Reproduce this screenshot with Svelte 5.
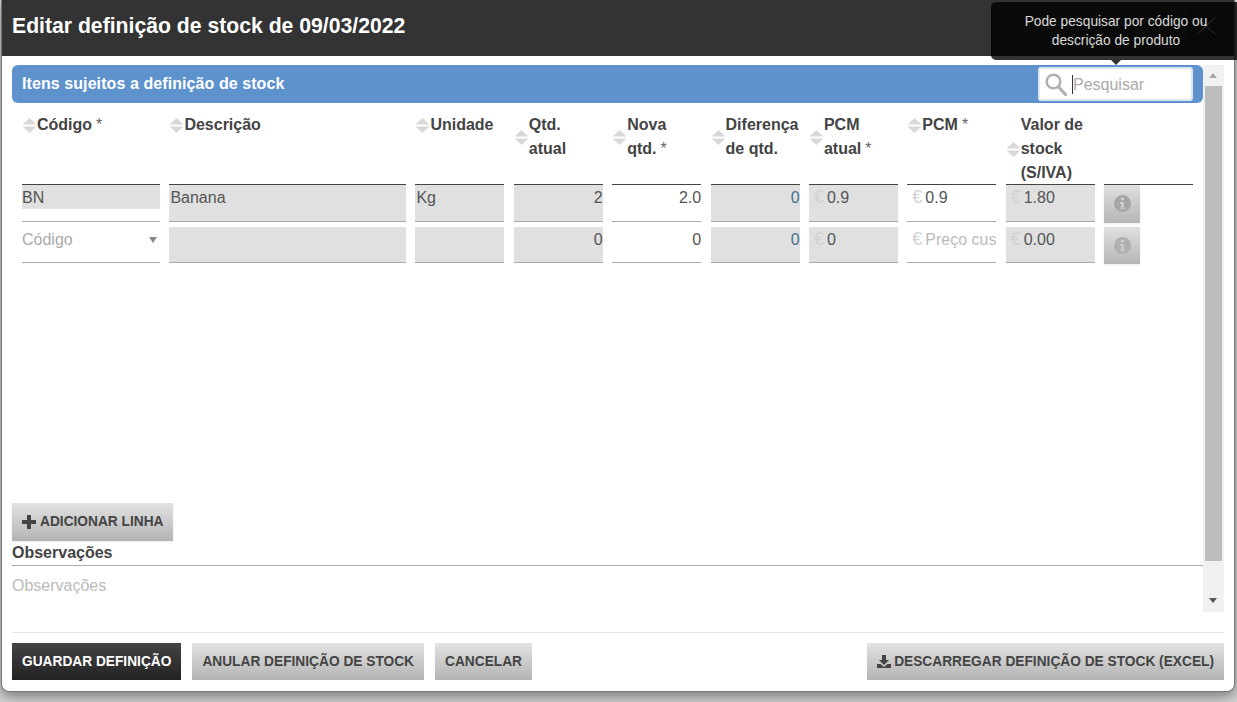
<script>
  const columns = [
    { label: "Código", req: true },
    { label: "Descrição" },
    { label: "Unidade" },
    { label: "Qtd.<br>atual" },
    { label: "Nova<br>qtd.", req: true },
    { label: "Diferença<br>de qtd." },
    { label: "PCM<br>atual", req: true },
    { label: "PCM", req: true },
    { label: "Valor de<br>stock<br>(S/IVA)" },
  ];

  const rows = [
    { code: "BN", desc: "Banana", unit: "Kg", qty: "2", next: "2.0", diff: "0", cost: "0.9", pcm: "0.9", total: "1.80" },
    { code: "", desc: "", unit: "", qty: "0", next: "0", diff: "0", cost: "0", pcm: "", total: "0.00" },
  ];
</script>

<div class="page">
  <div class="modal">
    <header class="modal-header">
      <h1>Editar definição de stock de 09/03/2022</h1>
      <button class="close-btn" aria-label="Fechar">
        <svg width="20" height="18" viewBox="0 0 20 18"><path d="M0.5 0.5 L19.5 17.5 M19.5 0.5 L0.5 17.5" stroke="#fff" stroke-width="1" fill="none" /></svg>
      </button>
    </header>

    <div class="modal-body">
      <div class="content">
        <div class="bar">
          <h2>Itens sujeitos a definição de stock</h2>
          <div class="search">
            <svg class="search-icon" width="22" height="23" viewBox="0 0 22 23">
              <circle cx="8.5" cy="8.5" r="6.8" fill="none" stroke="#b0b0b0" stroke-width="2.6" />
              <path d="M13.5 14 L20.5 21.5" stroke="#b0b0b0" stroke-width="3.2" stroke-linecap="round" />
            </svg>
            <span class="caret"></span>
            <span class="search-ph">Pesquisar</span>
            <div class="tooltip">Pode pesquisar por código ou<br>descrição de produto</div>
          </div>
        </div>

        <div class="grid">
          {#each columns as col}
            <div class="th">
              <div class="th-inner">
                <svg class="sort" width="15" height="15" viewBox="0 0 15 15">
                  <path d="M7.5 0 L14.5 6.5 H0.5 Z M0.5 8.5 H14.5 L7.5 15 Z" fill="#d8d8d8" />
                </svg>
                <span>{@html col.label}{#if col.req}<span class="req">*</span>{/if}</span>
              </div>
            </div>
          {/each}
          <div class="th"></div>

          {#each rows as row, i}
            <div class="td td-code" class:first={i === 0}>
              {#if row.code}
                <div class="code-value">{row.code}</div>
              {:else}
                <span class="ph">Código</span>
                <span class="select-arrow"></span>
              {/if}
            </div>
            <div class="td ro left" class:first={i === 0}>{row.desc}</div>
            <div class="td ro left" class:first={i === 0}>{row.unit}</div>
            <div class="td ro right" class:first={i === 0}>{row.qty}</div>
            <div class="td right" class:first={i === 0}>{row.next}</div>
            <div class="td ro right blue" class:first={i === 0}>{row.diff}</div>
            <div class="td ro money" class:first={i === 0}><i>€</i>{row.cost}</div>
            <div class="td money" class:first={i === 0}>
              <i>€</i>{#if row.pcm}{row.pcm}{:else}<input class="cost-input" placeholder="Preço custo" />{/if}
            </div>
            <div class="td ro money" class:first={i === 0}><i>€</i>{row.total}</div>
            <div class="td-action" class:first={i === 0}>
              <button class="info" class:dim={i === 1} aria-label="Informação">
                <svg width="17" height="17" viewBox="0 0 17 17">
                  <path fill-rule="evenodd" d="M8.5 0a8.5 8.5 0 1 0 0 17a8.5 8.5 0 0 0 0-17Z M7 2.8h3v2.5H7Z M6 7h4v5.2h1.2v2H5.9v-2H7V9H6Z" />
                </svg>
              </button>
            </div>
          {/each}
        </div>

        <div class="spacer"></div>

        <button class="btn add">
          <svg width="14" height="14" viewBox="0 0 14 14"><path d="M5 0h4v5h5v4H9v5H5V9H0V5h5Z" fill="#444" /></svg>
          ADICIONAR LINHA
        </button>
        <div class="obs-label">Observações</div>
        <div class="obs-field">Observações</div>
      </div>

      <div class="scrollbar">
        <span class="arrow-up"></span>
        <div class="thumb"></div>
        <span class="arrow-down"></span>
      </div>
    </div>

    <footer class="modal-footer">
      <button class="btn dark">GUARDAR DEFINIÇÃO</button>
      <button class="btn">ANULAR DEFINIÇÃO DE STOCK</button>
      <button class="btn">CANCELAR</button>
      <button class="btn download">
        <svg width="14" height="13" viewBox="0 0 14 13">
          <path d="M5 0h4v5h3L7 10 2 5h3Z M0 9h3.5L7 12l3.5-3H14v4H0Z" fill="#444" />
        </svg>
        DESCARREGAR DEFINIÇÃO DE STOCK (EXCEL)
      </button>
    </footer>
  </div>
</div>

<style>
  :global(body) {
    margin: 0;
    background: #d4d4d4;
    overflow: hidden;
  }

  .page {
    height: 702px;
    padding-left: 1px;
    box-sizing: border-box;
    font-family: "Liberation Sans", Arial, sans-serif;
    color: #555;
    font-size: 16px;
    overflow: hidden;
    position: relative;
  }

  .modal {
    width: 1234px;
    height: 692px;
    box-sizing: border-box;
    background: #fff;
    border: 1px solid #777;
    border-top: 0;
    border-radius: 0 0 8px 8px;
    box-shadow: 0 4px 14px rgba(0, 0, 0, 0.45);
    display: flex;
    flex-direction: column;
  }

  .modal-header {
    height: 56px;
    flex: none;
    box-sizing: border-box;
    background: #333;
    display: flex;
    align-items: center;
    justify-content: space-between;
    padding: 0 10px 4px 10px;
  }

  h1 {
    margin: 0;
    font-size: 21.2px;
    font-weight: 700;
    color: #fff;
  }

  .close-btn {
    width: 37px;
    height: 37px;
    padding: 0;
    border: 0;
    background: rgba(0, 0, 0, 0.1);
    display: flex;
    align-items: center;
    justify-content: center;
  }

  .modal-body {
    height: 547px;
    flex: none;
    margin: 9px 10px 0 10px;
    display: flex;
  }

  .content {
    flex: 1;
    min-width: 0;
    display: flex;
    flex-direction: column;
  }

  .bar {
    height: 38px;
    flex: none;
    box-sizing: border-box;
    background: #5d92cd;
    border-radius: 6px;
    padding: 0 10px;
    display: flex;
    align-items: center;
    justify-content: space-between;
  }

  h2 {
    margin: 0;
    font-size: 16px;
    font-weight: 700;
    letter-spacing: 0.08px;
    color: #fff;
  }

  .search {
    position: relative;
    width: 155px;
    height: 34px;
    box-sizing: border-box;
    background: #fff;
    border: 2px solid #dbe7f5;
    border-radius: 3px;
    display: flex;
    align-items: center;
    padding: 2px 0 0 5px;
    margin-top: -1px;
  }

  .search-icon {
    flex: none;
  }

  .caret {
    width: 1px;
    height: 19px;
    background: #333;
    margin-left: 5px;
  }

  .search-ph {
    color: #aaa;
  }

  .tooltip {
    position: absolute;
    left: -49px;
    top: -67px;
    width: 250px;
    height: 58px;
    box-sizing: border-box;
    padding-top: 10px;
    background: #000;
    opacity: 0.8;
    color: #fff;
    border-radius: 5px;
    font-size: 13.75px;
    line-height: 19px;
    text-align: center;
    z-index: 5;
  }

  .tooltip::after {
    content: "";
    position: absolute;
    left: 120px;
    bottom: -5px;
    border-left: 5px solid transparent;
    border-right: 5px solid transparent;
    border-top: 5px solid #000;
  }

  .grid {
    flex: none;
    display: grid;
    grid-template-columns: 138px 236.6px repeat(8, 89px);
    column-gap: 9.4px;
    margin: 0 10px;
    color: #555;
  }

  .th {
    height: 81px;
    box-sizing: border-box;
    padding-top: 10px;
    font-weight: 700;
    color: #444;
    line-height: 24px;
  }

  .th-inner {
    display: flex;
    align-items: center;
  }

  .sort {
    flex: none;
  }

  .req {
    font-weight: 400;
    color: #666;
    margin-left: 4px;
  }

  .td {
    height: 36px;
    box-sizing: border-box;
    border-bottom: 1px solid #aaa;
    line-height: 25px;
    white-space: nowrap;
    overflow: hidden;
    margin-top: 5px;
  }

  .td.first {
    height: 38px;
    margin-top: 0;
    border-top: 1px solid #444;
  }

  .ro {
    background: #e0e0e0;
  }

  .left {
    padding-left: 1px;
  }

  .right {
    text-align: right;
  }

  .blue {
    color: #46708f;
  }

  .td-code {
    position: relative;
  }

  .code-value {
    height: 24px;
    background: #e0e0e0;
  }

  .ph {
    color: #aaa;
  }

  .select-arrow {
    position: absolute;
    right: 3px;
    top: 10px;
    border-left: 4px solid transparent;
    border-right: 4px solid transparent;
    border-top: 6px solid #888;
  }

  .money {
    padding-left: 18px;
    position: relative;
  }

  .money i {
    position: absolute;
    left: 5px;
    font-style: normal;
    font-size: 18px;
    color: #d2d2d2;
  }

  .cost-input {
    width: 100%;
    height: 25px;
    box-sizing: border-box;
    padding: 0;
    border: 0;
    background: transparent;
    font: inherit;
    display: block;
  }

  .cost-input::placeholder {
    color: #bbb;
    opacity: 1;
  }

  .td-action {
    height: 36px;
    margin-top: 5px;
  }

  .td-action.first {
    height: 38px;
    box-sizing: border-box;
    margin-top: 0;
    border-top: 1px solid #444;
  }

  .info {
    width: 36px;
    height: 37px;
    padding: 0 0 1px 1px;
    border: 0;
    background: linear-gradient(#e0e0e0, #b5b5b5);
    box-shadow: 0 1px 2px rgba(0, 0, 0, 0.08);
    display: flex;
    align-items: center;
    justify-content: center;
  }

  .first .info {
    height: 38px;
  }

  .info svg {
    display: block;
    fill: #a6a6a6;
  }

  .info.dim svg {
    fill: #b0b0b0;
  }

  .spacer {
    flex: 1;
  }

  .btn {
    height: 37px;
    padding: 0 10px 1px;
    border: 0;
    background: linear-gradient(#e2e2e2, #b4b4b4);
    color: #444;
    font-family: inherit;
    font-size: 13.72px;
    font-weight: 700;
    white-space: nowrap;
    display: inline-flex;
    align-items: center;
    gap: 4px;
  }

  .add {
    height: 38px;
    align-self: flex-start;
    box-shadow: 0 1px 2px rgba(0, 0, 0, 0.08);
  }

  .obs-label {
    height: 25px;
    box-sizing: border-box;
    line-height: 23px;
    font-weight: 700;
    color: #444;
    border-bottom: 1px solid #aaa;
  }

  .obs-field {
    height: 46px;
    box-sizing: border-box;
    padding-top: 8px;
    line-height: 24px;
    color: #bbb;
  }

  .scrollbar {
    width: 21px;
    flex: none;
    background: #f1f1f1;
    position: relative;
  }

  .thumb {
    position: absolute;
    left: 2px;
    right: 2px;
    top: 21px;
    height: 475px;
    background: #bdbdbd;
  }

  .arrow-up,
  .arrow-down {
    position: absolute;
    left: 6px;
    border-left: 4.5px solid transparent;
    border-right: 4.5px solid transparent;
  }

  .arrow-up {
    top: 8px;
    border-bottom: 5px solid #aaa;
  }

  .arrow-down {
    bottom: 9px;
    border-top: 5px solid #555;
  }

  .modal-footer {
    margin: 20px 10px 0 10px;
    padding-top: 10px;
    border-top: 1px solid #e5e5e5;
    display: flex;
    gap: 11px;
  }

  .dark {
    background: linear-gradient(#444, #222);
    color: #fff;
  }

  .download {
    margin-left: auto;
    gap: 3px;
  }
</style>
